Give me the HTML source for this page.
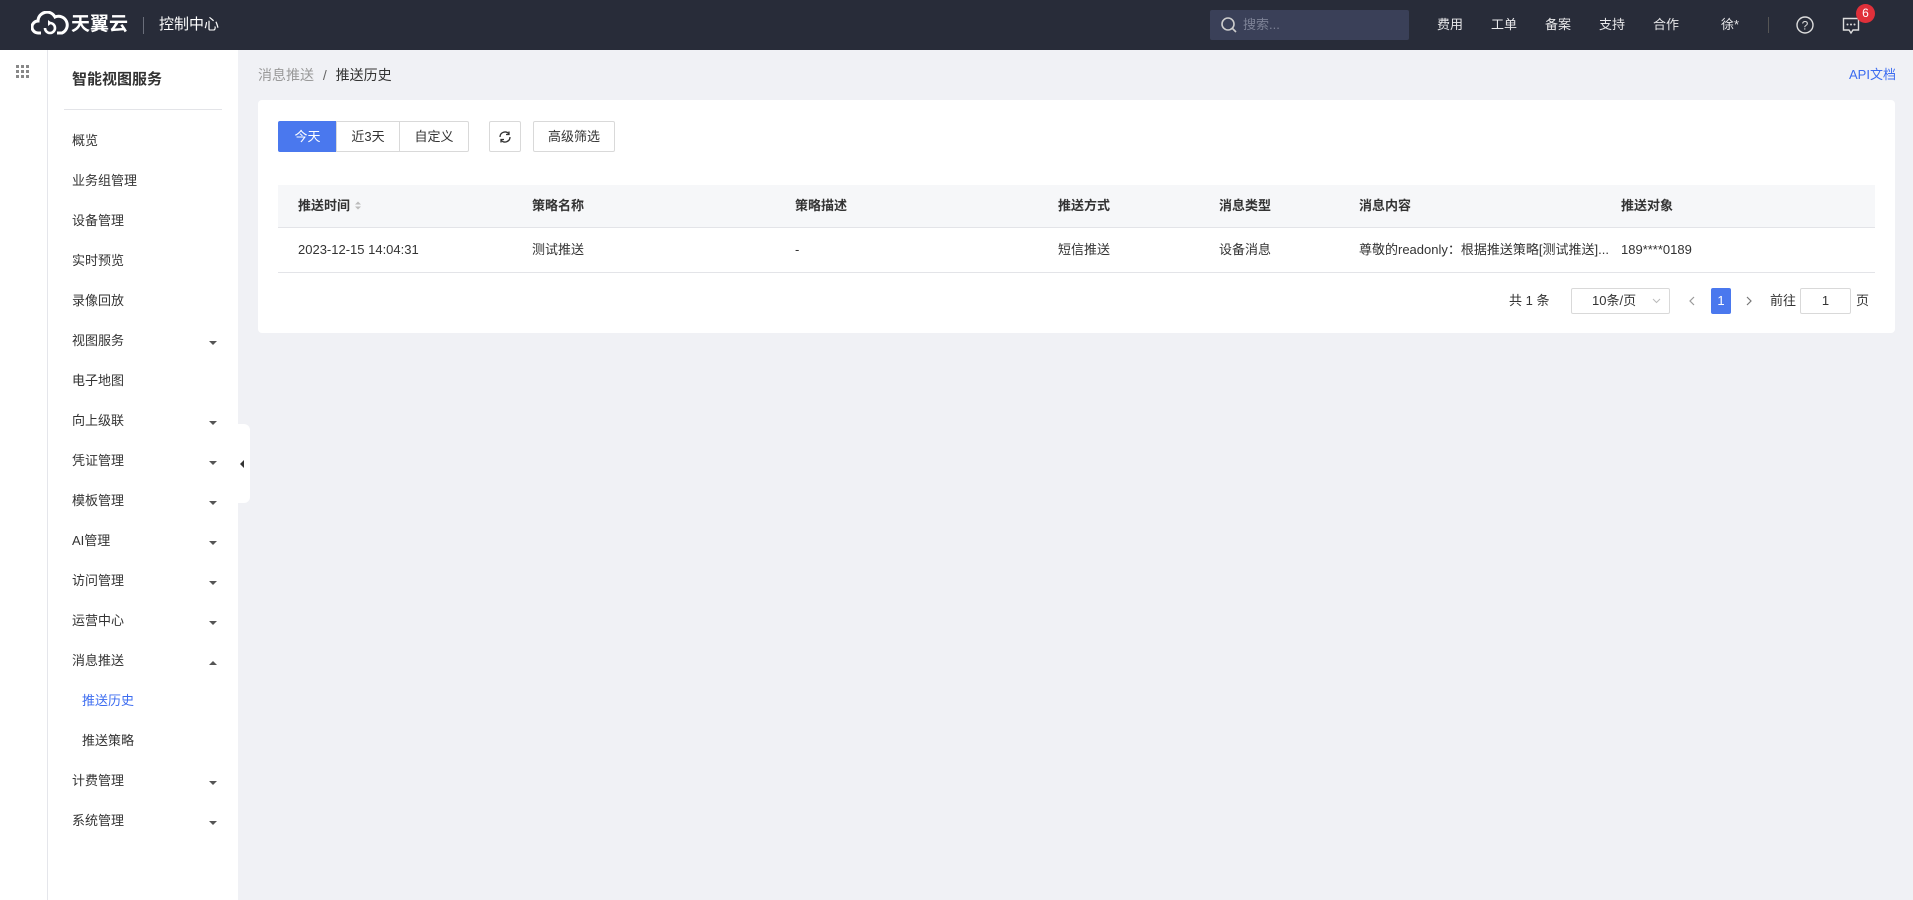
<!DOCTYPE html>
<html><head><meta charset="utf-8"><style>
*{box-sizing:border-box;margin:0;padding:0}
body{width:1913px;height:900px;overflow:hidden;background:#f0f1f5;font-family:"Liberation Sans","Noto Sans CJK SC",sans-serif;font-size:13px;color:#333;position:relative;line-height:16px}
.a{position:absolute;white-space:nowrap}
.hdr{position:absolute;left:0;top:0;width:1913px;height:50px;background:#282c39;color:#fff}
.nav{font-size:13px;color:#e8e8ea;top:17px}
.side0{position:absolute;left:0;top:50px;width:48px;height:850px;background:#fff;border-right:1px solid #e5e6eb}
.side{position:absolute;left:48px;top:50px;width:190px;height:850px;background:#fff}
.mi{position:absolute;left:24px;font-size:13px;color:#333}
.arr{position:absolute;left:161px;width:0;height:0;border-left:4px solid transparent;border-right:4px solid transparent;border-top:4px solid #555}
.card{position:absolute;left:258px;top:100px;width:1637px;height:233px;background:#fff;border-radius:4px}
.btn{position:absolute;top:121px;height:31px;border:1px solid #d9d9d9;background:#fff;font-size:13px;color:#333;display:flex;align-items:center;justify-content:center}
.th{position:absolute;top:198px;font-size:13px;color:#333;font-weight:bold}
.td{position:absolute;top:242px;font-size:13px;color:#333}
</style></head><body>
<div class="hdr">
 <svg class="a" style="left:31px;top:11px" width="38" height="26" viewBox="0 0 38 26"><path d="M10 22 H7 A6 6 0 0 1 7 10 A9 9 0 0 1 24 6 A8 8 0 0 1 31 22 H26" fill="none" stroke="#fff" stroke-width="3"/><path d="M14 17 A5 5 0 1 0 19 12" fill="none" stroke="#fff" stroke-width="2.6"/><path d="M17 9 L21 12 L17 15Z" fill="#fff"/></svg>
 <div class="a" style="left:71px;top:14px;font-size:19px;line-height:22px;font-weight:bold;color:#fff">天翼云</div>
 <div class="a" style="left:143px;top:17px;width:1px;height:17px;background:#6a6e7a"></div>
 <div class="a" style="left:159px;top:16px;font-size:15px;line-height:18px;color:#fff">控制中心</div>
 <div class="a" style="left:1210px;top:10px;width:199px;height:30px;background:#3a4058;border-radius:2px"></div>
 <svg class="a" style="left:1220px;top:16px" width="18" height="18" viewBox="0 0 18 18"><circle cx="8" cy="8" r="6" fill="none" stroke="#ccc" stroke-width="1.6"/><path d="M12.5 12.5L16 16" stroke="#ccc" stroke-width="1.6"/></svg>
 <div class="a" style="left:1243px;top:17px;font-size:13px;color:#7d8296">搜索...</div>
 <div class="a nav" style="left:1437px">费用</div>
 <div class="a nav" style="left:1491px">工单</div>
 <div class="a nav" style="left:1545px">备案</div>
 <div class="a nav" style="left:1599px">支持</div>
 <div class="a nav" style="left:1653px">合作</div>
 <div class="a nav" style="left:1721px">徐*</div>
 <div class="a" style="left:1768px;top:17px;width:1px;height:16px;background:#555"></div>
 <svg class="a" style="left:1795px;top:15px" width="20" height="20" viewBox="0 0 20 20"><circle cx="10" cy="10" r="8" fill="none" stroke="#ddd" stroke-width="1.4"/><text x="10" y="14.5" font-size="12" text-anchor="middle" fill="#ddd" font-family="Liberation Sans">?</text></svg>
 <svg class="a" style="left:1842px;top:17px" width="18" height="18" viewBox="0 0 18 18"><path d="M1.5 1.5H16.5V13H11L9 16L7 13H1.5Z" fill="none" stroke="#ddd" stroke-width="1.4"/><circle cx="5.5" cy="7.5" r="1" fill="#ddd"/><circle cx="9" cy="7.5" r="1" fill="#ddd"/><circle cx="12.5" cy="7.5" r="1" fill="#ddd"/></svg>
 <div class="a" style="left:1856px;top:4px;width:19px;height:19px;border-radius:50%;background:#e0303a;color:#fff;font-size:12px;text-align:center;line-height:19px">6</div>
</div>
<div class="side0">
 <svg class="a" style="left:16px;top:15px" width="13" height="13" viewBox="0 0 13 13" fill="#888"><rect x="0" y="0" width="3" height="3"/><rect x="5" y="0" width="3" height="3"/><rect x="10" y="0" width="3" height="3"/><rect x="0" y="5" width="3" height="3"/><rect x="5" y="5" width="3" height="3"/><rect x="10" y="5" width="3" height="3"/><rect x="0" y="10" width="3" height="3"/><rect x="5" y="10" width="3" height="3"/><rect x="0" y="10" width="3" height="3"/><rect x="10" y="10" width="3" height="3"/></svg>
</div>
<div class="side">
 <div class="a" style="left:24px;top:20px;font-size:15px;line-height:20px;font-weight:bold;color:#333">智能视图服务</div>
 <div class="a" style="left:16px;top:59px;width:158px;height:1px;background:#e3e4e8"></div>
 <div class="mi" style="top:83px">概览</div>
 <div class="mi" style="top:123px">业务组管理</div>
 <div class="mi" style="top:163px">设备管理</div>
 <div class="mi" style="top:203px">实时预览</div>
 <div class="mi" style="top:243px">录像回放</div>
 <div class="mi" style="top:283px">视图服务</div><div class="arr" style="top:291px"></div>
 <div class="mi" style="top:323px">电子地图</div>
 <div class="mi" style="top:363px">向上级联</div><div class="arr" style="top:371px"></div>
 <div class="mi" style="top:403px">凭证管理</div><div class="arr" style="top:411px"></div>
 <div class="mi" style="top:443px">模板管理</div><div class="arr" style="top:451px"></div>
 <div class="mi" style="top:483px">AI管理</div><div class="arr" style="top:491px"></div>
 <div class="mi" style="top:523px">访问管理</div><div class="arr" style="top:531px"></div>
 <div class="mi" style="top:563px">运营中心</div><div class="arr" style="top:571px"></div>
 <div class="mi" style="top:603px">消息推送</div><div class="arr" style="top:611px;border-top:0;border-bottom:4px solid #555"></div>
 <div class="mi" style="top:643px;left:34px;color:#3c6cf0">推送历史</div>
 <div class="mi" style="top:683px;left:34px">推送策略</div>
 <div class="mi" style="top:723px">计费管理</div><div class="arr" style="top:731px"></div>
 <div class="mi" style="top:763px">系统管理</div><div class="arr" style="top:771px"></div>
</div>
<div class="a" style="left:238px;top:424px;width:12px;height:79px;background:#fff;border-radius:0 6px 6px 0"></div>
<div class="a" style="left:240px;top:460px;width:0;height:0;border-top:4px solid transparent;border-bottom:4px solid transparent;border-right:4px solid #333"></div>
<div class="a" style="left:258px;top:67px;font-size:14px;color:#999">消息推送 <span style="color:#666;margin:0 5px">/</span> <span style="color:#333">推送历史</span></div>
<div class="a" style="left:1849px;top:67px;font-size:13px;color:#3c6cf0">API文档</div>
<div class="card"></div>
<div class="btn" style="left:278px;width:59px;background:#4a78ee;border-color:#4a78ee;color:#fff;border-radius:2px 0 0 2px">今天</div>
<div class="btn" style="left:336px;width:64px">近3天</div>
<div class="btn" style="left:399px;width:70px;border-radius:0 2px 2px 0">自定义</div>
<div class="btn" style="left:489px;width:32px;border-radius:2px"><svg width="14" height="14" viewBox="0 0 14 14"><path d="M2 7A5 5 0 0 1 11 4M12 7A5 5 0 0 1 3 10" fill="none" stroke="#333" stroke-width="1.3"/><path d="M11 1.5V4.5H8" fill="none" stroke="#333" stroke-width="1.3"/><path d="M3 12.5V9.5H6" fill="none" stroke="#333" stroke-width="1.3"/></svg></div>
<div class="btn" style="left:533px;width:82px;border-radius:2px">高级筛选</div>
<div class="a" style="left:278px;top:185px;width:1597px;height:43px;background:#f6f7f9;border-bottom:1px solid #e3e4e8"></div>
<div class="a" style="left:278px;top:272px;width:1597px;height:1px;background:#e3e4e8"></div>
<div class="th" style="left:298px">推送时间 <svg width="8" height="11" viewBox="0 0 8 11" style="vertical-align:-1px"><path d="M1 4.5L4 1.5L7 4.5Z M1 6.5L4 9.5L7 6.5Z" fill="#bbb"/></svg></div>
<div class="th" style="left:532px">策略名称</div>
<div class="th" style="left:795px">策略描述</div>
<div class="th" style="left:1058px">推送方式</div>
<div class="th" style="left:1219px">消息类型</div>
<div class="th" style="left:1359px">消息内容</div>
<div class="th" style="left:1621px">推送对象</div>
<div class="td" style="left:298px">2023-12-15 14:04:31</div>
<div class="td" style="left:532px">测试推送</div>
<div class="td" style="left:795px">-</div>
<div class="td" style="left:1058px">短信推送</div>
<div class="td" style="left:1219px">设备消息</div>
<div class="td" style="left:1359px">尊敬的readonly：根据推送策略[测试推送]...</div>
<div class="td" style="left:1621px">189****0189</div>
<div class="a" style="left:1509px;top:293px;font-size:13px;color:#333">共 1 条</div>
<div class="a" style="left:1571px;top:288px;width:99px;height:26px;border:1px solid #d9d9d9;border-radius:2px;font-size:13px;line-height:24px;padding-left:20px">10条/页<svg style="position:absolute;left:80px;top:9px" width="9" height="6" viewBox="0 0 9 6"><path d="M1 1L4.5 4.5L8 1" fill="none" stroke="#bbb" stroke-width="1"/></svg></div>
<svg class="a" style="left:1689px;top:296px" width="6" height="10" viewBox="0 0 6 10"><path d="M5 1L1 5L5 9" fill="none" stroke="#999" stroke-width="1.2"/></svg>
<div class="a" style="left:1711px;top:288px;width:20px;height:26px;background:#4a78ee;color:#fff;border-radius:2px;text-align:center;line-height:26px;font-size:13px">1</div>
<svg class="a" style="left:1746px;top:296px" width="6" height="10" viewBox="0 0 6 10"><path d="M1 1L5 5L1 9" fill="none" stroke="#777" stroke-width="1.2"/></svg>
<div class="a" style="left:1770px;top:293px;font-size:13px">前往</div>
<div class="a" style="left:1800px;top:288px;width:51px;height:26px;border:1px solid #d9d9d9;border-radius:2px;text-align:center;line-height:24px;font-size:13px">1</div>
<div class="a" style="left:1856px;top:293px;font-size:13px">页</div>
</body></html>
